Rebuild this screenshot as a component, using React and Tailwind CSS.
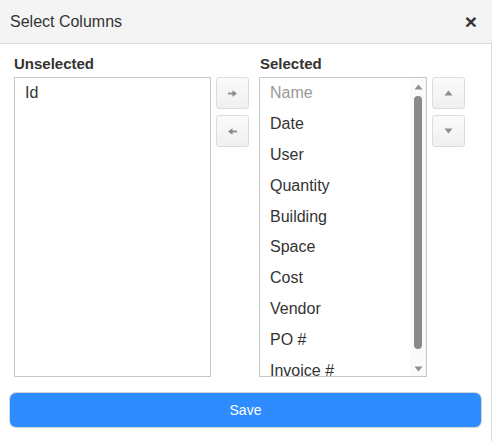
import React from 'react';

const selected = ['Name', 'Date', 'User', 'Quantity', 'Building', 'Space', 'Cost', 'Vendor', 'PO #', 'Invoice #'];

function SmallButton({ children }) {
  return (
    <button className="w-[33px] h-[32px] flex items-center justify-center rounded-[3px] border border-[#dcdcdc] bg-gradient-to-b from-[#fafafa] to-[#f0f0f0]">
      {children}
    </button>
  );
}

function Arrow({ dir }) {
  return (
    <svg width="9" height="7" viewBox="0 0 9 7" className={dir === 'left' ? 'rotate-180' : ''}>
      <rect x="0" y="2.6" width="5" height="1.8" fill="#8a8a8a" />
      <path d="M4.5 0.2 L9 3.5 L4.5 6.8 Z" fill="#8a8a8a" />
    </svg>
  );
}

function Tri({ dir }) {
  return (
    <svg width="9" height="6" viewBox="0 0 9 6">
      {dir === 'up' ? <path d="M0.5 5.5 L4.5 0.5 L8.5 5.5 Z" fill="#8e8e8e" /> : <path d="M0.5 0.5 L4.5 5.5 L8.5 0.5 Z" fill="#8e8e8e" />}
    </svg>
  );
}

export default function App() {
  return (
    <div className="w-[492px] h-[441px] bg-white text-[#333] font-['Liberation_Sans',Arial,sans-serif] flex flex-col">
      <div className="h-[44px] shrink-0 bg-[#f4f4f4] border-b border-[#dcdcdc] flex items-center justify-between pl-[10px] pr-[15px]">
        <span className="text-[16px]">Select Columns</span>
        <span className="text-[21px] font-bold leading-none">×</span>
      </div>

      <div className="flex-1 border-r border-[#dcdcdc] flex flex-col">
        <div className="flex pl-[14px] pt-[11px]">
          <div className="w-[197px] flex flex-col">
            <div className="text-[15px] font-bold h-[22px] leading-[18px]">Unselected</div>
            <div className="h-[300px] border border-[#c8c8c8] text-[16px]">
              <div className="h-[30px] flex items-center pl-[10px]">Id</div>
            </div>
          </div>

          <div className="ml-[5px] mt-[22px] flex flex-col gap-[6px]">
            <SmallButton><Arrow dir="right" /></SmallButton>
            <SmallButton><Arrow dir="left" /></SmallButton>
          </div>

          <div className="ml-[10px] w-[168px] flex flex-col">
            <div className="text-[15px] font-bold h-[22px] leading-[18px] pl-[1px]">Selected</div>
            <div className="relative h-[300px] border border-[#c8c8c8] text-[16px] overflow-hidden">
              {selected.map((s, i) => (
                <div key={s} className={`h-[30.8px] flex items-center pl-[10px] ${i === 0 ? 'text-[#999]' : ''}`}>{s}</div>
              ))}
              <div className="absolute top-0 right-0 w-[16px] h-full bg-[#fafafa] flex flex-col items-center">
                <div className="mt-[6px]"><Tri dir="up" /></div>
                <div className="mt-[6px] w-[8px] h-[253px] rounded-full bg-[#8a8a8a]" />
                <div className="mt-[17px]"><Tri dir="down" /></div>
              </div>
            </div>
          </div>

          <div className="ml-[5px] mt-[22px] flex flex-col gap-[6px]">
            <SmallButton><Tri dir="up" /></SmallButton>
            <SmallButton><Tri dir="down" /></SmallButton>
          </div>
        </div>

        <div className="px-[10px] mt-[16px]">
          <button className="w-[471px] h-[34px] rounded-[6px] bg-[#2e8cff] text-white text-[14px] shadow-[0_0_0_1px_#d6d6d6]">
            Save
          </button>
        </div>
      </div>
    </div>
  );
}
